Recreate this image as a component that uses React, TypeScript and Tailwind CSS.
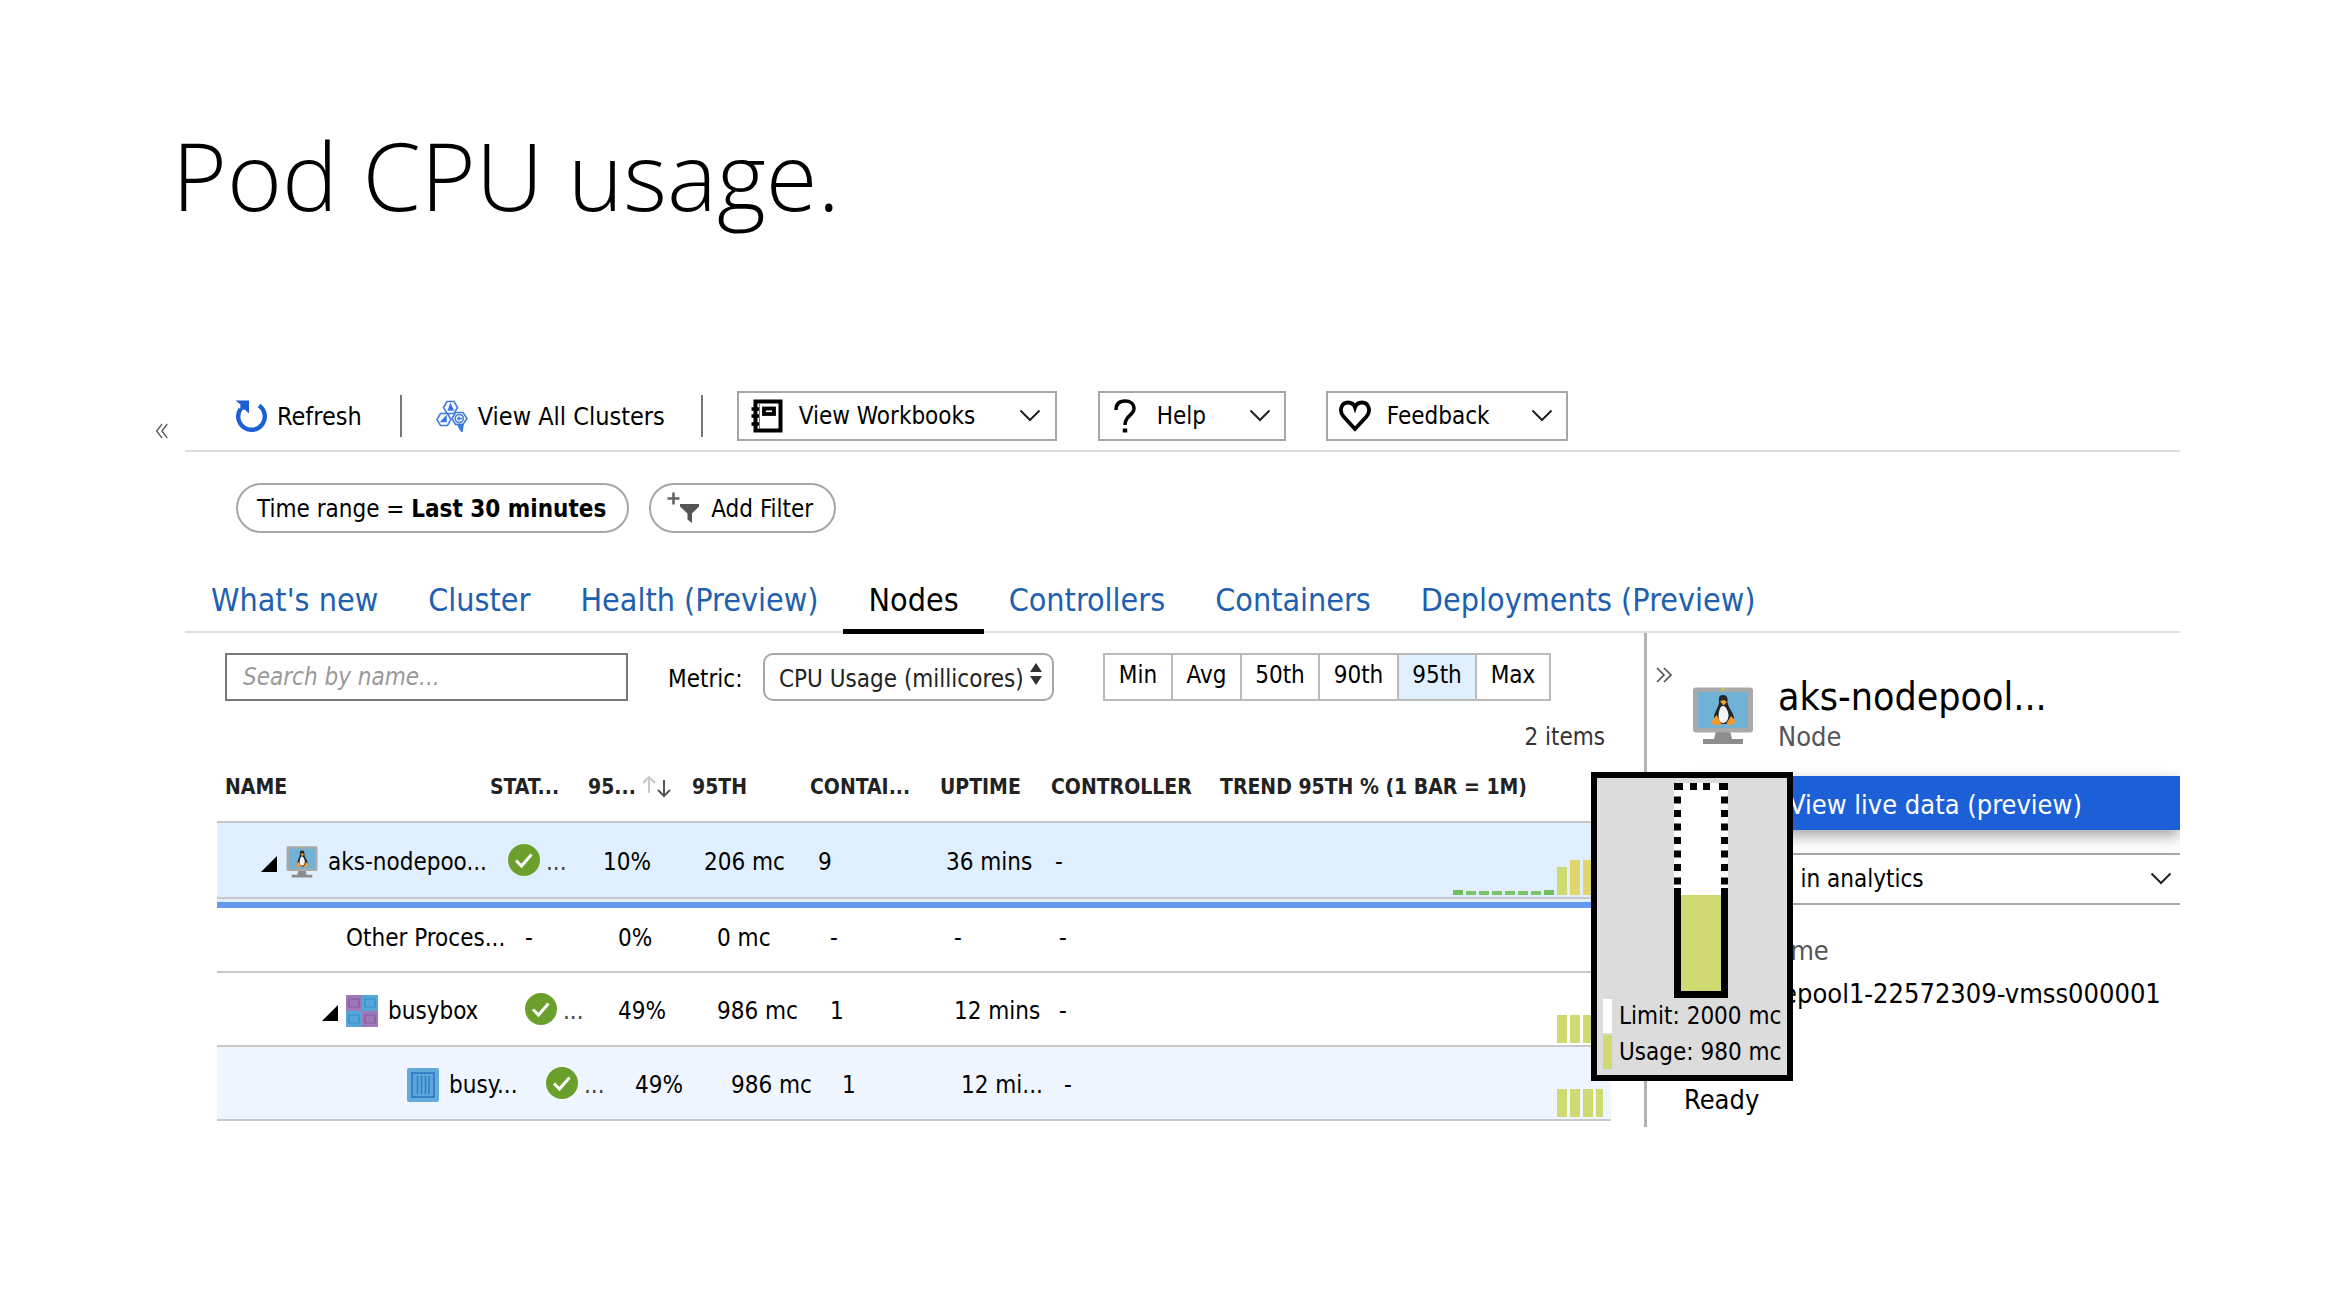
import React from 'react';

const Chevron = ({ className = '' }: { className?: string }) => (
  <svg viewBox="0 0 22 14" className={`h-[14px] w-[22px] shrink-0 ${className}`} fill="none" stroke="#222" strokeWidth="2">
    <path d="M1.5 1.5 11 11 20.5 1.5" />
  </svg>
);

const DoubleChevron = ({ flip = false }: { flip?: boolean }) => (
  <svg viewBox="0 0 16 16" className={flip ? 'h-4 w-3 rotate-180' : 'h-4 w-4'} preserveAspectRatio="none" fill="none" stroke="#555" strokeWidth="1.7">
    <path d="M1 1 8 8 1 15M8 1 15 8 8 15" />
  </svg>
);

const RefreshIcon = () => (
  <svg viewBox="0 0 32 32" className="h-8 w-8 shrink-0">
    <path d="M24 5.5A13.3 13.3 0 1 1 5.500 9" fill="none" stroke="#1d5fd6" strokeWidth="4.4" />
    <path d="M0.500 0.500H14V13.500L9.500 9.500 5 10.500 5.500 4.500Z" fill="#1d5fd6" />
  </svg>
);

const ClustersIcon = () => (
  <svg viewBox="0 0 32 32" className="h-8 w-8 shrink-0" fill="none" stroke="#3f7be0" strokeWidth="1.6">
    <path d="M11 1.5H18L21.5 7.5 18 13.5H11L7.500 7.500Z" />
    <path d="M4.500 13.500H11.500L15 19.500 11.500 25.500H4.500L1 19.500Z" />
    <path d="M19.500 12.500H27L31 18.500 27 24.500H19.500L16 18.500Z" />
    <circle cx="23.3" cy="18.5" r="4" />
    <path d="M21 18.500H26M23 16.500V20.500" />
    <path d="M12.500 10 14.500 4.500 17 10Z" fill="#1d5fd6" />
    <path d="M5.500 21.500 10 16.500V21.500Z" fill="#1d5fd6" />
    <path d="M22 24.500H27L26 31.500 23.500 28Z" fill="#3f7be0" />
  </svg>
);

const WorkbookIcon = () => (
  <svg viewBox="0 0 32 34" className="h-[34px] w-8 shrink-0" fill="none" stroke="#000">
    <rect x="4.5" y="2.5" width="25" height="29" strokeWidth="4" />
    <rect x="13" y="9.5" width="10" height="5.5" strokeWidth="3.8" />
    <path d="M8.500 4V30" strokeWidth="1" stroke="#777" />
    <path d="M0.500 10H8M0.500 17H8M0.500 25H8" strokeWidth="3.6" />
  </svg>
);

const QuestionIcon = () => (
  <svg viewBox="0 0 22 34" className="h-[34px] w-[22px] shrink-0" fill="none" stroke="#000" strokeWidth="3.4">
    <path d="M2 11C2 5 5.500 2 11 2S20 5 20 9.500C20 16.500 11 16 11 26" />
    <path d="M11 29.500V33.500" strokeWidth="4.5" />
  </svg>
);

const HeartIcon = () => (
  <svg viewBox="0 0 32 32" className="h-8 w-8 shrink-0" fill="none" stroke="#000" strokeWidth="3.8">
    <path d="M16 29 4.500 16.500C-0.500 10.500 2.500 2.500 9 2.500 12.500 2.500 15 4.500 16 7.500 17 4.500 19.500 2.500 23 2.500 29.500 2.500 32.500 10.500 27.500 16.500Z" />
  </svg>
);

const AddFilterIcon = () => (
  <svg viewBox="0 0 32 32" className="h-8 w-8 shrink-0">
    <path d="M6.500 0.500V12.500M0.500 6.500H12.500" stroke="#666" strokeWidth="2.6" />
    <path d="M13 12H32V14.500L25 21.500V31L20.500 27.500V21.500L13 14.500Z" fill="#555" />
  </svg>
);

const NodeIcon = ({ className }: { className: string }) => (
  <svg viewBox="0 0 62 58" preserveAspectRatio="none" className={`shrink-0 ${className}`}>
    <path d="M24 44H38L40 52H51V57H11V52H22Z" fill="#8d8d8d" />
    <rect x="1" y="0.5" width="60" height="45" rx="3" fill="#a9a9a9" />
    <rect x="6" y="5" width="50" height="36" fill="#6fb2d6" />
    <circle cx="31" cy="2.5" r="1.5" fill="#c9cf3a" />
    <path d="M31 8C27 8 26.500 11 27 15 27 20 22 25 22 31L27 37H36L42 31C41 24 36 21 35.500 15 36 11 35 8 31 8Z" fill="#262626" />
    <path d="M31 19C28 19 27 24 26.500 28 26.500 33 28 36 31 36S36.500 33 36.500 28C36 24 34 19 31 19Z" fill="#f1f5f8" />
    <path d="M28 14 32 13 35 15 31.500 18.500Z" fill="#f2a12e" />
    <path d="M20 34 24.500 28 29.500 36.500 27 38.500 20 37ZM43.500 34 39 29 34.500 36.500 36 38.500 42 37Z" fill="#f29a2e" />
  </svg>
);

const PodIcon = () => (
  <svg viewBox="0 0 32 32" className="h-8 w-8 shrink-0">
    <rect width="16" height="16" fill="#9f78b8" />
    <rect x="16" width="16" height="16" fill="#55a7da" />
    <rect y="16" width="16" height="16" fill="#55a7da" />
    <rect x="16" y="16" width="16" height="16" fill="#9f78b8" />
    <g fill="none" strokeWidth="1.2">
      <path d="M3 4H13V12H3ZM19 20H29V28H19Z" stroke="#8259a3" />
      <path d="M19 4H29V12H19ZM3 20H13V28H3Z" stroke="#3a88c6" />
    </g>
  </svg>
);

const ContainerIcon = () => (
  <svg viewBox="0 0 32 34" className="h-[34px] w-8 shrink-0">
    <rect width="32" height="34" rx="2" fill="#62abdb" />
    <rect x="5" y="5" width="22" height="24" fill="#5ba6dc" stroke="#2f7fc4" strokeWidth="1.8" />
    <path d="M10.500 8V26M14.500 8V26M18.500 8V26M22 8V26" stroke="#2f7fc4" strokeWidth="1.500" />
  </svg>
);

const CheckIcon = () => (
  <svg viewBox="0 0 32 32" className="h-8 w-8 shrink-0">
    <circle cx="16" cy="16" r="16" fill="#6a9f2b" />
    <path d="M8 16.500 13.500 22 23.500 10.500" fill="none" stroke="#fff" strokeWidth="3" />
  </svg>
);

const Triangle = () => (
  <svg viewBox="0 0 16 16" className="mt-1 h-4 w-4 shrink-0">
    <path d="M16 0V16H0Z" fill="#000" />
  </svg>
);

type Row = {
  name: string;
  kind: 'node' | 'process' | 'pod' | 'container';
  ok: boolean;
  values: string[];
  bars: { h: string; c: string }[];
};

const dash = { h: 'h-[4px] w-[10px]', c: 'bg-[#7cc36b]' };
const dashTall = { h: 'h-[5px] w-[10px]', c: 'bg-[#6fbe62]' };
const lime = { h: 'h-[28px] w-[10px]', c: 'bg-[#cfdb72]' };
const limeThin = { h: 'h-[28px] w-[7px]', c: 'bg-[#cfdb72]' };
const amber = { h: 'h-[35px] w-[10px]', c: 'bg-[#e2d56c]' };

const rows: Row[] = [
  {
    name: 'aks-nodepoo...', kind: 'node', ok: true,
    values: ['10%', '206 mc', '9', '36 mins', '-'],
    bars: [dashTall, dash, dash, dash, dash, dash, dash, dashTall, lime, amber, amber, { h: 'h-[35px] w-[7px]', c: 'bg-[#e2d56c]' }],
  },
  { name: 'Other Proces...', kind: 'process', ok: false, values: ['0%', '0 mc', '-', '-', '-'], bars: [] },
  { name: 'busybox', kind: 'pod', ok: true, values: ['49%', '986 mc', '1', '12 mins', '-'], bars: [lime, lime, lime, limeThin] },
  { name: 'busy...', kind: 'container', ok: true, values: ['49%', '986 mc', '1', '12 mi...', '-'], bars: [lime, lime, lime, limeThin] },
];

const rowStyle = {
  node: 'h-[76px] bg-[#e0effd]',
  process: 'h-[65px]',
  pod: 'h-[74px]',
  container: 'h-[74px] bg-[#eff6ff]',
};
const nameIndent = { node: 'pl-11', process: 'pl-[129px]', pod: 'pl-[105px]', container: 'pl-[190px]' };
const level1 = ['pl-[18px]', 'pl-[15px]', 'pl-[14px]', 'pl-2', 'pl-[6px]', 'pl-[5px]'];
const level2 = ['pl-[35px]', 'pl-[30px]', 'pl-[27px]', 'pl-[20px]', 'pl-[14px]', 'pl-[9px]'];
const level3 = ['pl-14', 'pl-[47px]', 'pl-[41px]', 'pl-8', 'pl-[21px]', 'pl-[14px]'];
const indents = { node: level1, process: level2, pod: level2, container: level3 };

const tabs = ["What's new", 'Cluster', 'Health (Preview)', 'Nodes', 'Controllers', 'Containers', 'Deployments (Preview)'];
const aggregations: [string, string][] = [
  ['Min', 'w-[68px]'], ['Avg', 'w-[69px]'], ['50th', 'w-[78px]'], ['90th', 'w-[79px]'], ['95th', 'w-[78px]'], ['Max', 'w-[74px]'],
];

function Toolbar() {
  const menu = 'flex h-[50px] items-center border-2 border-[#a6a6a6] bg-white text-[24px] leading-8';
  return (
    <div className="flex h-[71px] items-center border-b-2 border-[#dedede] pl-[50px]">
      <button type="button" className="flex items-center gap-[10px] text-[25px] leading-8"><RefreshIcon /><span className="pt-[2px]">Refresh</span></button>
      <div className="ml-[38px] h-[42px] w-[2px] bg-[#777]" />
      <button type="button" className="ml-[34px] flex items-center gap-[10px] text-[25px] leading-8"><ClustersIcon /><span className="pt-[2px]">View All Clusters</span></button>
      <div className="ml-9 h-[42px] w-[2px] bg-[#777]" />
      <button type="button" className={`${menu} ml-[34px] w-[320px] pr-[14px] pl-3`}>
        <WorkbookIcon /><span className="ml-4">View Workbooks</span><Chevron className="ml-auto" />
      </button>
      <button type="button" className={`${menu} ml-[41px] w-[188px] pr-[13px] pl-[14px]`}>
        <QuestionIcon /><span className="ml-[21px]">Help</span><Chevron className="ml-auto" />
      </button>
      <button type="button" className={`${menu} ml-10 w-[242px] pr-[13px] pl-[11px]`}>
        <HeartIcon /><span className="ml-4">Feedback</span><Chevron className="ml-auto" />
      </button>
    </div>
  );
}

function Controls() {
  return (
    <div className="flex h-12 items-center pl-2 text-[24px] leading-8">
      <input aria-label="Search by name" placeholder="Search by name..." className="h-12 w-[403px] border-2 border-[#777] px-4 italic placeholder:text-[#999]" />
      <label htmlFor="metric" className="ml-10 w-[95px] pt-1">Metric:</label>
      <div className="relative h-12 w-[291px]">
        <select id="metric" className="h-12 w-full appearance-none rounded-[10px] border-2 border-[#a6a6a6] bg-white pl-[14px] pt-1 text-[#222]">
          <option>CPU Usage (millicores)</option>
        </select>
        <svg viewBox="0 0 14 22" className="pointer-events-none absolute top-[10px] right-[11px] h-[22px] w-[14px]" fill="#333">
          <path d="M7 0 13 9H1ZM7 22 13 13H1Z" />
        </svg>
      </div>
      <div className="ml-[49px] flex h-12 border-y-2 border-l-2 border-[#bababa]">
        {aggregations.map(([label, width]) => (
          <button key={label} type="button" className={`${width} border-r-2 border-[#bababa] pb-1 ${label === '95th' ? 'bg-[#e0effd]' : ''}`}>{label}</button>
        ))}
      </div>
    </div>
  );
}

function NodesTable() {
  const head = 'p-0 text-left font-bold';
  return (
    <table className="w-full table-fixed border-separate border-spacing-0 whitespace-nowrap">
      <colgroup>
        <col className="w-[273px]" /><col className="w-[98px]" /><col className="w-[102px]" /><col className="w-[120px]" />
        <col className="w-[130px]" /><col className="w-[110px]" /><col className="w-[170px]" /><col />
      </colgroup>
      <thead>
        <tr className="h-[70px] text-[21px] leading-6 text-[#222] [&>th]:border-b-2 [&>th]:border-[#c4c4c4]">
          <th className={`${head} pl-2`}>NAME</th>
          <th className={head}>STAT...</th>
          <th className={head}>
            <span className="flex items-center gap-[6px]">95...
              <svg viewBox="0 0 30 24" className="h-6 w-[30px]" fill="none" strokeWidth="2">
                <path d="M7 18V2M1 8 7 2 13 8" stroke="#c8c8c8" /><path d="M22 5V21M16 15 22 21 28 15" stroke="#555" />
              </svg>
            </span>
          </th>
          <th className={`${head} pl-[2px]`}>95TH</th>
          <th className={head}>CONTAI...</th>
          <th className={head}>UPTIME</th>
          <th className={`${head} pl-[1px]`}>CONTROLLER</th>
          <th className={head}>TREND 95TH % (1 BAR = 1M)</th>
        </tr>
      </thead>
      <tbody className="text-[24px] leading-8">
        {rows.map((row) => {
          const pad = indents[row.kind];
          const nudge = row.kind === 'process' ? 'pb-1' : 'pt-1';
          return (
            <React.Fragment key={row.name}>
              <tr className={`${rowStyle[row.kind]} [&>td]:border-b-2 [&>td]:border-[#c9c9c9]`}>
                <td className={`p-0 ${nameIndent[row.kind]}`}>
                  <span className={`flex items-center ${nudge}`}>
                    {(row.kind === 'node' || row.kind === 'pod') && <Triangle />}
                    {row.kind === 'node' && <NodeIcon className="ml-[9px] mr-[10px] h-8 w-8" />}
                    {row.kind === 'pod' && <span className="ml-2 mr-[10px]"><PodIcon /></span>}
                    {row.kind === 'container' && <span className="mr-[10px]"><ContainerIcon /></span>}
                    {row.name}
                  </span>
                </td>
                <td className={`p-0 ${pad[0]}`}>
                  {row.ok ? <span className="flex items-center gap-[6px]"><CheckIcon /><span className="pt-1 text-[#444]">...</span></span> : <span className="block pb-1">-</span>}
                </td>
                {row.values.map((value, i) => (
                  <td key={i} className={`p-0 ${pad[i + 1]}`}><span className={`block ${nudge}`}>{value}</span></td>
                ))}
                <td className="p-0 pr-2 align-bottom">
                  <span className="flex items-end justify-end gap-[3px] pb-[2px]">
                    {row.bars.map((bar, i) => <span key={i} className={`${bar.h} ${bar.c}`} />)}
                  </span>
                </td>
              </tr>
              {row.kind === 'node' && (
                <tr aria-hidden="true"><td colSpan={8} className="h-[9px] border-b-[6px] border-[#6599ef] bg-[#e0effd] p-0" /></tr>
              )}
            </React.Fragment>
          );
        })}
      </tbody>
    </table>
  );
}

function DetailsPanel() {
  return (
    <aside className="w-[536px] shrink-0 overflow-hidden border-l-[3px] border-[#b3b3b3] pl-[9px] whitespace-nowrap">
      <div className="flex pt-[34px]">
        <button type="button" aria-label="Collapse panel" className="h-4"><DoubleChevron /></button>
        <NodeIcon className="mt-5 ml-5 h-[58px] w-[62px]" />
        <div className="ml-6">
          <h2 className="h-[44px] text-[39px] leading-[60px]">aks-nodepool...</h2>
          <p className="pt-[10px] text-[27px] leading-8 text-[#555]">Node</p>
        </div>
      </div>
      <div className="pl-[28px]">
        <button type="button" className="mt-[23px] block h-[54px] w-full bg-[#1d5fd6] pl-[105px] pt-1 text-left text-[27px] leading-8 text-white shadow-[0_6px_14px_rgba(0,0,0,0.35)]">View live data (preview)</button>
        <button type="button" className="mt-[23px] flex h-[52px] w-full items-center border-y-2 border-l-2 border-[#a6a6a6] bg-white pr-2 pl-[42px] text-[24px] leading-8">Query in analytics<Chevron className="ml-auto" /></button>
        <dl className="text-[27px] leading-8">
          <dt className="mt-[30px] pl-[2px] text-[#555]">Node Name</dt>
          <dd className="mt-[11px] pl-[2px]">aks-nodepool1-22572309-vmss000001</dd>
          <dd className="mt-[74px]">Ready</dd>
        </dl>
      </div>
    </aside>
  );
}

function UsageTooltip() {
  return (
    <div role="tooltip" className="absolute top-[139px] right-[387px] h-[309px] w-[202px] border-[6px] border-black bg-[#dcdcdc] pt-[5px] text-[24px] leading-8">
      <div className="ml-[77px] flex w-[54px] flex-col">
        <svg viewBox="0 0 54 105" className="h-[105px] w-full">
          <rect width="54" height="105" fill="#fff" />
          <path d="M3.500 0V105M50.500 0V105" stroke="#000" strokeWidth="7" strokeDasharray="7 6.500" />
          <path d="M0 3.500H9M16 3.500H23M29 3.500H36M45 3.500H54" stroke="#000" strokeWidth="7" />
        </svg>
        <div className="h-[110px] border-x-[7px] border-b-[7px] border-black bg-white pt-[7px]"><div className="h-full bg-[#cfdb72]" /></div>
      </div>
      <div className="flex h-9 items-center gap-[7px] pl-[6px] whitespace-nowrap"><span className="h-[34px] w-[9px] bg-white" />Limit: 2000 mc</div>
      <div className="flex h-9 items-center gap-[7px] pl-[6px] whitespace-nowrap"><span className="h-[34px] w-[9px] bg-[#cfdb72]" />Usage: 980 mc</div>
    </div>
  );
}

export default function App() {
  return (
    <main className="min-h-screen bg-white pt-[111px] pr-[148px] pl-[156px] font-['DejaVu_Sans_Condensed','Noto_Sans',sans-serif] text-black">
      <h1 className="pl-4 font-['Open_Sans',sans-serif] text-[94px] leading-[128px] font-[350]">Pod CPU usage.</h1>
      <div className="mt-[142px] flex">
        <div className="w-[29px] shrink-0 pt-[41px]">
          <button type="button" aria-label="Expand menu"><DoubleChevron flip /></button>
        </div>
        <div className="min-w-0 flex-1">
          <Toolbar />
          <div className="flex gap-5 pt-[31px] pl-[51px] text-[24px] leading-8">
            <button type="button" className="h-[50px] rounded-full border-2 border-[#a6a6a6] pr-[21px] pl-[19px] pt-[2px]">Time range = <b>Last 30 minutes</b></button>
            <button type="button" className="flex h-[50px] items-center gap-3 rounded-full border-2 border-[#a6a6a6] pr-[21px] pl-4"><AddFilterIcon /><span className="pt-[2px]">Add Filter</span></button>
          </div>
          <nav className="flex h-[100px] items-end border-b-2 border-[#dedede] pl-[1px] text-[32px] leading-10">
            {tabs.map((tab) => (
              <a key={tab} href="#" aria-current={tab === 'Nodes' ? 'page' : undefined}
                className={`-mb-[3px] flex h-[62px] items-center border-b-[5px] px-[25px] pb-[2px] ${tab === 'Nodes' ? 'border-black text-black' : 'border-transparent text-[#2060ae]'}`}>{tab}</a>
            ))}
          </nav>
          <div className="relative flex">
            <section className="min-w-0 flex-1 pt-5 pr-[33px] pb-[6px] pl-8">
              <Controls />
              <p className="mt-5 pr-[6px] text-right text-[24px] leading-8 text-[#333]">2 items</p>
              <NodesTable />
            </section>
            <DetailsPanel />
            <UsageTooltip />
          </div>
        </div>
      </div>
    </main>
  );
}
